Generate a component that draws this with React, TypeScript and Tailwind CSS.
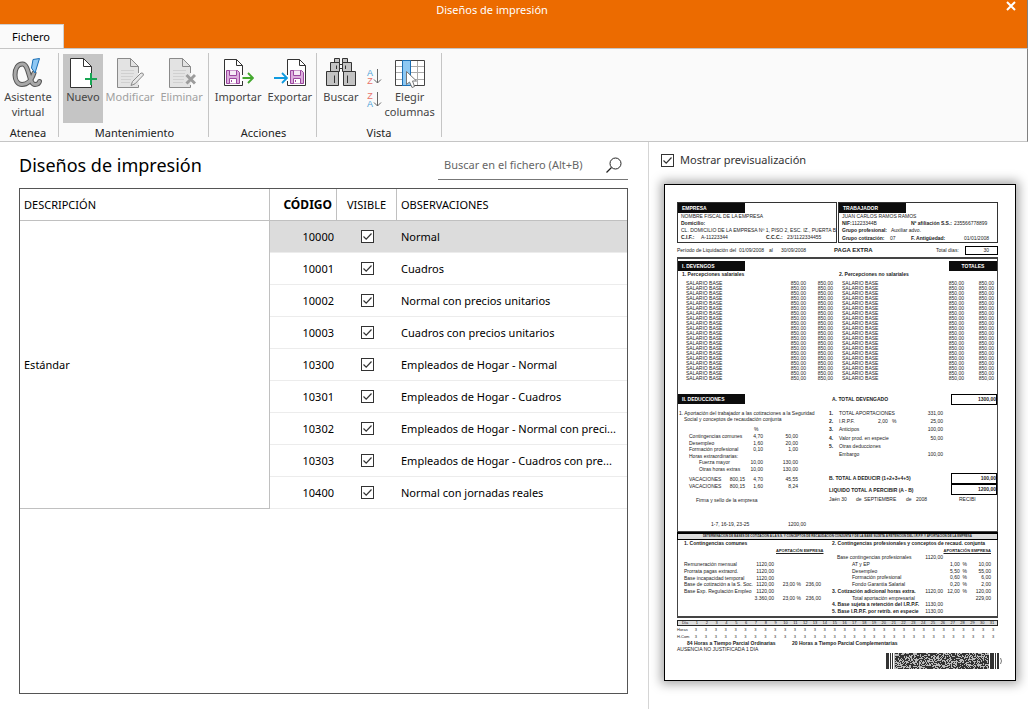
import React from 'react';

const rows = [
  { code: '10000', text: 'Normal' },
  { code: '10001', text: 'Cuadros' },
  { code: '10002', text: 'Normal con precios unitarios' },
  { code: '10003', text: 'Cuadros con precios unitarios' },
  { code: '10300', text: 'Empleados de Hogar - Normal' },
  { code: '10301', text: 'Empleados de Hogar - Cuadros' },
  { code: '10302', text: 'Empleados de Hogar - Normal con preci...' },
  { code: '10303', text: 'Empleados de Hogar - Cuadros con pre...' },
  { code: '10400', text: 'Normal con jornadas reales' },
];

/* ---------- Icons ---------- */

const AlphaIcon = () => (
  <svg className="w-8 h-8" viewBox="0 0 32 32" fill="none">
    <g strokeLinecap="round" strokeLinejoin="round">
      <path d="M22 16C20 22 16 27.5 10 27.5C5.5 27.5 3 23 3 18C3 11 6 7 10.5 7C17.5 7 16.5 27.5 23 27.5C26 27.5 27 26.5 27.5 24.5" stroke="#555" strokeWidth="5" />
      <path d="M22 16C20 22 16 27.5 10 27.5C5.5 27.5 3 23 3 18C3 11 6 7 10.5 7C17.5 7 16.5 27.5 23 27.5C26 27.5 27 26.5 27.5 24.5" stroke="#a8a8a8" strokeWidth="3" />
    </g>
    <path d="M21 2.5L27.5 1.5L23 16L19.5 11Z" fill="#8ec8f4" stroke="#1b6fb5" />
  </svg>
);

const Page = ({ stroke, fill }: { stroke: string; fill: string }) => (
  <>
    <path d="M2.5 1.5H15.5L23.5 9.5V30.5H2.5Z" fill={fill} />
    <path d="M23.5 16V9.5L15.5 1.5H2.5V30.5H23.5V28M15.5 1.5V9.5H23.5" stroke={stroke} />
  </>
);

const NewIcon = () => (
  <svg className="w-[29px] h-8" viewBox="0 0 29 32" fill="none">
    <Page stroke="#333" fill="#fff" />
    <path d="M23 16V28M17 22H29" stroke="#17a654" strokeWidth="2" />
  </svg>
);

const EditIcon = () => (
  <svg className="w-[29px] h-8" viewBox="0 0 29 32" fill="none">
    <Page stroke="#8a8a8a" fill="#e3e3e3" />
    <path d="M6 13.5H19M6 16.5H19M6 19.5H18M6 22.5H16M6 25.5H15" stroke="#d0d0d0" />
    <path d="M16 28.5L17.5 24.5L26 16Q28.5 15.5 28.5 18L20 26.8Z" fill="#e8e8e8" stroke="#8a8a8a" />
  </svg>
);

const DeleteIcon = () => (
  <svg className="w-[29px] h-8" viewBox="0 0 29 32" fill="none">
    <Page stroke="#8a8a8a" fill="#e3e3e3" />
    <path d="M6 13.5H19M6 16.5H18M6 19.5H17M6 22.5H17M6 25.5H16" stroke="#d0d0d0" />
    <path d="M19.5 18L28 26.5M28 18L19.5 26.5" stroke="#9c9c9c" strokeWidth="3" />
  </svg>
);

const Floppy = () => (
  <g stroke="#9b479f">
    <path d="M0.5 0.5H11.5L13.5 2.5V13.5H0.5Z" fill="#dcaedd" />
    <path d="M3.5 0.5V5.5H10.5V0.5" fill="#f6eaf6" />
    <path d="M3.5 13.5V8.5H10.5V13.5" fill="#fff" />
    <path d="M5.5 10V12" />
  </g>
);

const ImportIcon = () => (
  <svg className="w-8 h-8" viewBox="0 0 32 32" fill="none">
    <path d="M2.5 2.5H14.5L20.5 8.5V28.5H2.5Z" fill="#fff" />
    <path d="M20.5 18V8.5L14.5 2.5H2.5V28.5H20.5V24M14.5 2.5V8.5H20.5" stroke="#333" />
    <g transform="translate(4 13)">
      <Floppy />
    </g>
    <path d="M20.5 21H31M26 16L31 21L26 26" stroke="#43a82e" strokeWidth="1.8" />
  </svg>
);

const ExportIcon = () => (
  <svg className="w-8 h-8" viewBox="0 0 32 32" fill="none">
    <path d="M13.5 2.5H25.5L31.5 8.5V28.5H13.5Z" fill="#fff" />
    <path d="M13.5 18V2.5H25.5L31.5 8.5V28.5H13.5V24M25.5 2.5V8.5H31.5" stroke="#333" />
    <g transform="translate(16 13)">
      <Floppy />
    </g>
    <path d="M0 21H13M8 16L13 21L8 26" stroke="#0f9be0" strokeWidth="1.8" />
  </svg>
);

const BinocularsIcon = () => (
  <svg className="w-8 h-8" viewBox="0 0 32 32" fill="#c3c3c3" stroke="#333">
    <path d="M13.5 7.5H18.5V11.5H13.5Z" fill="#fff" />
    <path d="M9.5 1.5H14.5V5.5H9.5ZM17.5 1.5H22.5V5.5H17.5Z" />
    <path d="M5.5 5.5H14.5V14.5H5.5ZM17.5 5.5H26.5V14.5H17.5Z" />
    <path d="M1.5 14.5H13.5V28.5H1.5ZM18.5 14.5H30.5V28.5H18.5Z" />
    <path d="M11.5 8.5V12M20.5 8.5V12M9.5 18.5V26M22.5 18.5V26" />
  </svg>
);

const SortIcon = ({ up }: { up?: boolean }) => (
  <svg className="w-4 h-[17px]" viewBox="0 0 16 17" fill="none">
    <text x="4" y="8" fontSize="9" textAnchor="middle" fill={up ? '#e8736b' : '#4a9fd8'} fontFamily="Liberation Sans, sans-serif">{up ? 'Z' : 'A'}</text>
    <text x="4" y="16" fontSize="9" textAnchor="middle" fill={up ? '#4a9fd8' : '#e8736b'} fontFamily="Liberation Sans, sans-serif">{up ? 'A' : 'Z'}</text>
    <path d="M11.5 1V15M8 11.5L11.5 15L15 11.5" stroke="#666" />
  </svg>
);

const ColumnsIcon = () => (
  <svg className="w-8 h-8" viewBox="0 0 32 32" fill="none">
    <path d="M1.5 3.5H30.5V28.5H1.5Z" fill="#fff" />
    <path d="M1 9.5H30M1 15.5H30M1 22.5H30M23.5 4V28" stroke="#aaa" />
    <path d="M1.5 3.5H30.5V28.5H1.5Z" stroke="#444" />
    <path d="M8.5 3.5H16.5V28.5H8.5Z" fill="#8ec8f2" stroke="#1b6fb5" />
    <path d="M12.5 14.5V27.5L15.5 25L18 30.5L20.5 29.5L18.5 24H22.5Z" fill="#fff" stroke="#777" />
  </svg>
);

/* ---------- Shared pieces ---------- */

const Checkbox = ({ id, label }: { id: string; label?: string }) => {
  const [checked, setChecked] = React.useState(true);
  return (
    <span className="relative block w-[13px] h-[13px] shrink-0">
      <input
        id={id}
        type="checkbox"
        aria-label={label}
        checked={checked}
        onChange={() => setChecked(!checked)}
        className="block appearance-none w-[13px] h-[13px] border border-[#333] bg-white"
      />
      {checked && (
        <svg className="absolute inset-0 pointer-events-none" viewBox="0 0 13 13" fill="none">
          <path d="M2.5 6.5L5.2 9.2L10.5 3.5" stroke="#333" strokeWidth="1.2" />
        </svg>
      )}
    </span>
  );
};

type RibbonButtonProps = {
  icon: React.ReactNode;
  label: string;
  active?: boolean;
  disabled?: boolean;
};

const RibbonButton = ({ icon, label, active, disabled }: RibbonButtonProps) => (
  <button
    disabled={disabled}
    className={`flex flex-col items-center h-[69px] pt-[3px] px-[3px] leading-[15px] ${active ? 'bg-[#c5c5c5]' : ''} ${disabled ? 'text-[#a0a0a0]' : 'text-[#444]'}`}
  >
    {icon}
    <span className="whitespace-pre-line">{label}</span>
  </button>
);

const RibbonGroup = ({ title, width, children }: { title: string; width: string; children: React.ReactNode }) => (
  <div className={`flex flex-col justify-between h-[84px] border-r border-[#c5c5c5] ${width}`}>
    <div className="flex justify-center pt-px">{children}</div>
    <div className="text-center leading-[8px] text-[#222]">{title}</div>
  </div>
);

/* ---------- Payslip preview ---------- */

const concepts = Array.from({ length: 20 }, (_, i) => i);
const days = Array.from({ length: 31 }, (_, i) => i + 1);

const contributions = [
  ['Contingencias comunes', '4,70', '50,00'],
  ['Desempleo', '1,60', '20,00'],
  ['Formación profesional', '0,10', '1,00'],
  ['Horas extraordinarias:', '', ''],
  ['Fuerza mayor', '10,00', '130,00'],
  ['Otras horas extras', '10,00', '130,00'],
];

const deductions = [
  ['1.', 'TOTAL APORTACIONES', '', '331,00'],
  ['2.', 'I.R.P.F.', '2,00   %', '25,00'],
  ['3.', 'Anticipos', '', '100,00'],
  ['4.', 'Valor prod. en especie', '', '50,00'],
  ['5.', 'Otras deducciones', '', ''],
  ['', 'Embargo', '', '100,00'],
];

const commonBases = [
  ['Remuneración mensual', '1120,00', '', ''],
  ['Prorrata pagas extraord.', '1120,00', '', ''],
  ['Base incapacidad temporal', '1120,00', '', ''],
  ['Base de cotización a la S. Soc.', '1120,00', '23,00 %', '236,00'],
  ['Base Exp. Regulación Empleo', '1120,00', '', ''],
  ['', '3.360,00', '23,00 %', '236,00'],
];

const professionalBases = [
  { text: 'Base contingencias profesionales', base: '1120,00', pct: '', total: '', style: 'pl-[5px]' },
  { text: 'AT y EP', base: '', pct: '1,00  %', total: '10,00', style: 'pl-5' },
  { text: 'Desempleo', base: '', pct: '5,50  %', total: '55,00', style: 'pl-5' },
  { text: 'Formación profesional', base: '', pct: '0,60  %', total: '6,00', style: 'pl-5' },
  { text: 'Fondo Garantía Salarial', base: '', pct: '0,20  %', total: '2,00', style: 'pl-5' },
  { text: '3. Cotización adicional horas extra.', base: '1120,00', pct: '12,00  %', total: '120,00', style: 'font-bold' },
  { text: 'Total aportación empresarial', base: '', pct: '', total: '229,00', style: 'pl-5' },
  { text: '4. Base sujeta a retención del I.R.P.F.', base: '1130,00', pct: '', total: '', style: 'font-bold' },
  { text: '5. Base I.R.P.F. por retrib. en especie', base: '1130,00', pct: '', total: '', style: 'font-bold' },
];

const BlackBar = ({ children }: { children: React.ReactNode }) => (
  <div className="w-[67px] h-[10px] bg-[#0c0c0c] text-white font-bold leading-[10px] pl-1">{children}</div>
);

const AmountBox = ({ children }: { children: React.ReactNode }) => (
  <div className="w-[46px] h-[11px] border border-black font-bold leading-[9px] text-right">{children}</div>
);

// PDF417-like strip, modules come from a small pseudo random generator
const Barcode = () => {
  const cells: string[] = [];
  let seed = 7919;
  for (let y = 0; y < 16; y++) {
    for (let x = 9; x < 103; x++) {
      seed = (seed * 48271) % 2147483647;
      if (seed / 2147483647 < 0.56) cells.push(`M${x} ${y}h1v1h-1z`);
    }
  }
  return (
    <svg className="w-[116px] h-4" viewBox="0 0 116 16" fill="#333">
      <path d="M0 0h3v16h-3zM4 0h1v16h-1zM6 0h1v16h-1zM104 0h4v16h-4zM109 0h1v16h-1zM111 0h2v16h-2z" />
      <path d="M8 0h95v16h-95z" fill="#bbb" />
      <path d={cells.join('')} />
      <path d="M114.5 5q2 3 0 6" fill="none" stroke="#777" />
    </svg>
  );
};

const Payslip = () => (
  <div className="bg-white border border-black shadow-[0_0_10px_3px_rgba(0,0,0,0.35)] pl-3 pr-[17px] pt-[17px] pb-[11px] font-['Liberation_Sans',Arial,sans-serif] text-[5px] leading-[6px] text-[#222] whitespace-pre cursor-default">
    <div className="grid grid-cols-2 gap-px">
      <div className="h-[41px] border border-[#333]">
        <BlackBar>EMPRESA</BlackBar>
        <div className="pl-[3px] leading-[7px]">
          <div>NOMBRE FISCAL DE LA EMPRESA</div>
          <div className="font-bold">Domicilio:</div>
          <div>CL. DOMICILIO DE LA EMPRESA Nº 1, PISO 2, ESC. IZ., PUERTA B</div>
          <div className="grid grid-cols-[20px_65px_21px_1fr]">
            <b>C.I.F.:</b>
            <span>A-11223344</span>
            <b>C.C.C.:</b>
            <span>23/1122334455</span>
          </div>
        </div>
      </div>
      <div className="h-[41px] border border-[#333]">
        <BlackBar>TRABAJADOR</BlackBar>
        <div className="pl-[3px] leading-[7px]">
          <div>JUAN CARLOS RAMOS RAMOS</div>
          <div className="grid grid-cols-[69px_43px_1fr]">
            <span><b>NIF:</b>11223344B</span>
            <b>Nº afiliación S.S.:</b>
            <span>235566778899</span>
          </div>
          <div className="grid grid-cols-[49px_1fr]">
            <b>Grupo profesional:</b>
            <span>Auxiliar advo.</span>
          </div>
          <div className="grid grid-cols-[48px_21px_1fr_auto] pt-px pr-2">
            <b>Grupo cotización:</b>
            <span>07</span>
            <b>F. Antigüedad:</b>
            <span>01/01/2008</span>
          </div>
        </div>
      </div>
    </div>

    <div className="grid grid-cols-[62px_30px_8px_57px_102px_29px_1fr] items-center h-[14px]">
      <span>Período de Liquidación del</span>
      <span>01/09/2008</span>
      <span>al</span>
      <span className="pl-1">30/09/2008</span>
      <b className="text-[6px]">PAGA EXTRA</b>
      <span>Total días:</span>
      <span className="h-[9px] border border-black text-right pr-2 leading-[7px]">30</span>
    </div>

    <div className="h-[275px] border border-t-2 border-[#444]">
      <div className="flex justify-between pt-[2px]">
        <BlackBar>I. DEVENGOS</BlackBar>
        <div className="w-12 h-[10px] bg-[#0c0c0c] text-white font-bold leading-[10px] text-center">TOTALES</div>
      </div>
      <div className="grid grid-cols-[157px_1fr] pl-1 font-bold">
        <span>1. Percepciones salariales</span>
        <span>2. Percepciones no salariales</span>
      </div>
      <div className="pt-1 pl-2 pr-[3px] leading-[5px]">
        {concepts.map((i) => (
          <div key={i} className="grid grid-cols-[98px_22px_27px_9px_86px_36px_1fr] text-right">
            <span className="text-left">SALARIO BASE</span>
            <span>850,00</span>
            <span>850,00</span>
            <span />
            <span className="text-left">SALARIO BASE</span>
            <span>850,00</span>
            <span>850,00</span>
          </div>
        ))}
      </div>

      <div className="grid grid-cols-[154px_1fr_auto] pt-[13px]">
        <BlackBar>II. DEDUCCIONES</BlackBar>
        <b className="leading-[10px]">A. TOTAL DEVENGADO</b>
        <AmountBox>1300,00</AmountBox>
      </div>

      <div className="grid grid-cols-[151px_1fr] pt-[5px]">
        <div>
          <div className="pl-px">1. Aportación del trabajador a las cotizaciones a la Seguridad</div>
          <div className="pl-[6px]">Social y conceptos de recaudación conjunta</div>
          <div className="pl-[76px] pt-1">%</div>
          <div className="flex flex-col justify-between h-10 pt-px pl-[11px]">
            {contributions.map(([text, pct, amount], i) => (
              <div key={text} className="grid grid-cols-[54px_20px_35px] text-right">
                <span className={i > 3 ? 'text-left pl-[10px]' : 'text-left'}>{text}</span>
                <span>{pct}</span>
                <span>{amount}</span>
              </div>
            ))}
          </div>
          <div className="pt-1 pl-[11px] leading-[7px]">
            <div className="grid grid-cols-[36px_20px_18px_35px] text-right">
              <span className="text-left">VACACIONES</span>
              <span>800,15</span>
              <span>4,70</span>
              <span>45,55</span>
            </div>
            <div className="grid grid-cols-[36px_20px_18px_35px] text-right">
              <span className="text-left">VACACIONES</span>
              <span>800,15</span>
              <span>1,60</span>
              <span>8,24</span>
            </div>
          </div>
          <div className="pl-[18px] pt-[7px]">Firma y sello de la empresa</div>
          <div className="grid grid-cols-[77px_1fr] pt-[18px] pl-[33px]">
            <span>1-7, 16-19, 23-25</span>
            <span>1200,00</span>
          </div>
        </div>
        <div>
          <div className="flex flex-col justify-between h-[47px]">
            {deductions.map(([n, text, pct, amount]) => (
              <div key={text} className="grid grid-cols-[10px_39px_25px_40px]">
                <b>{n}</b>
                <span>{text}</span>
                <span>{pct}</span>
                <span className="text-right">{amount}</span>
              </div>
            ))}
          </div>
          <div className="flex justify-between pt-4">
            <b className="leading-[11px]">B. TOTAL A DEDUCIR (1+2+3+4+5)</b>
            <AmountBox>100,00</AmountBox>
          </div>
          <div className="flex justify-between">
            <b className="leading-[12px]">LIQUIDO TOTAL A PERCIBIR (A - B)</b>
            <AmountBox>1200,00</AmountBox>
          </div>
          <div className="grid grid-cols-[27px_8px_42px_10px_43px_1fr]">
            <span>Jaén 30</span>
            <span>de</span>
            <span>SEPTIEMBRE</span>
            <span>de</span>
            <span>2008</span>
            <span>RECIBI</span>
          </div>
        </div>
      </div>
    </div>

    <div className="h-2 border border-t-2 border-black bg-[#ddd] text-[3px] leading-[5px] font-bold text-center">
      DETERMINACIÓN DE BASES DE COTIZACIÓN A LA S.S. Y CONCEPTOS DE RECAUDACIÓN CONJUNTA Y DE LA BASE SUJETA A RETENCIÓN DEL I.R.P.F. Y APORTACIÓN DE LA EMPRESA
    </div>
    <div className="grid grid-cols-[154px_1fr] h-[78px] border border-t-0 border-b-2 border-[#444]">
      <div className="pl-[6px]">
        <b className="block">1. Contingencias comunes</b>
        <div className="pt-[2px] pl-[92px] text-[4px]"><b className="underline">APORTACIÓN EMPRESA</b></div>
        <div className="flex flex-col justify-between h-10 mt-[7px]">
          {commonBases.map(([text, base, pct, total], i) => (
            <div key={i} className="grid grid-cols-[70px_20px_27px_20px] text-right">
              <span className="text-left">{text}</span>
              <span>{base}</span>
              <span>{pct}</span>
              <span>{total}</span>
            </div>
          ))}
        </div>
      </div>
      <div>
        <b className="block">2. Contingencias profesionales y conceptos de recaud. conjunta</b>
        <div className="pt-[2px] text-right pr-[6px] text-[4px]"><b className="underline">APORTACIÓN EMPRESA</b></div>
        <div className="flex flex-col justify-between h-[60px]">
          {professionalBases.map(({ text, base, pct, total, style }) => (
            <div key={text} className="grid grid-cols-[91px_20px_24px_24px] text-right">
              <span className={`text-left ${style}`}>{text}</span>
              <span>{base}</span>
              <span>{pct}</span>
              <span>{total}</span>
            </div>
          ))}
        </div>
      </div>
    </div>

    <div className="pt-[2px] text-center text-[4px]">
      <div className="grid grid-cols-[14px_repeat(31,minmax(0,1fr))] h-[6px] leading-[4px] border border-[#222] bg-[#ddd]">
        <span>Día</span>
        {days.map((d) => (
          <span key={d}>{d}</span>
        ))}
      </div>
      {['Horas', 'H.Com'].map((name) => (
        <div key={name} className="grid grid-cols-[14px_repeat(31,minmax(0,1fr))] leading-[7px]">
          <span className="text-left">{name}</span>
          {days.map((d) => (
            <span key={d}>3</span>
          ))}
        </div>
      ))}
    </div>
    <div className="grid grid-cols-[105px_1fr] pl-[10px] font-bold">
      <span>84 Horas a Tiempo Parcial Ordinarias</span>
      <span>20 Horas a Tiempo Parcial Complementarias</span>
    </div>
    <div>AUSENCIA NO JUSTIFICADA 1 DIA</div>
    <div className="flex justify-end -mr-1 pt-px">
      <Barcode />
    </div>
  </div>
);

/* ---------- Page ---------- */

const App = () => {
  return (
    <div className="min-h-screen flex flex-col bg-white font-['Noto_Sans','Open_Sans',sans-serif] text-[11px] text-black">
      <header className="h-12 bg-[#ec6b00] flex flex-col justify-between border-r border-[#808080]">
        <div className="flex items-start">
          <div className="grow text-center text-white leading-5 pr-3">Diseños de impresión</div>
          <button aria-label="Cerrar" className="w-[31px] h-3 pr-px flex items-center justify-center">
            <svg className="w-[10px] h-[10px]" viewBox="0 0 10 10" fill="none">
              <path d="M1 1L9 9M9 1L1 9" stroke="#fff" strokeWidth="2" />
            </svg>
          </button>
        </div>
        <button className="w-16 h-6 pt-px pr-px bg-[#fafafa] border-t border-r border-[#d0d0d0] text-center">Fichero</button>
      </header>

      <div className="flex h-[94px] pt-1 bg-[#fafafa] border-t border-b border-r border-y-[#c5c5c5] border-r-[#808080]">
        <RibbonGroup title="Atenea" width="w-[59px] pr-[2px]">
          <RibbonButton icon={<AlphaIcon />} label={'Asistente\nvirtual'} />
        </RibbonGroup>
        <RibbonGroup title="Mantenimiento" width="w-[150px] pl-[2px]">
          <RibbonButton icon={<NewIcon />} label="Nuevo" active />
          <RibbonButton icon={<EditIcon />} label="Modificar" disabled />
          <RibbonButton icon={<DeleteIcon />} label="Eliminar" disabled />
        </RibbonGroup>
        <RibbonGroup title="Acciones" width="w-[108px] pl-[2px]">
          <RibbonButton icon={<ImportIcon />} label="Importar" />
          <RibbonButton icon={<ExportIcon />} label="Exportar" />
        </RibbonGroup>
        <RibbonGroup title="Vista" width="w-[125px]">
          <RibbonButton icon={<BinocularsIcon />} label="Buscar" />
          <div className="flex flex-col gap-[6px] pt-[14px] pl-1">
            <button aria-label="Orden ascendente"><SortIcon /></button>
            <button aria-label="Orden descendente"><SortIcon up /></button>
          </div>
          <RibbonButton icon={<ColumnsIcon />} label={'Elegir\ncolumnas'} />
        </RibbonGroup>
      </div>

      <main className="grow flex">
        <section className="grow flex flex-col border-r border-[#d5d5d5] pl-[19px] pr-5 pb-[15px]">
          <div className="flex justify-between items-start h-[46px] pt-2">
            <h1 className="text-lg leading-[30px]">Diseños de impresión</h1>
            <div className="flex items-center w-[190px] h-[30px] border-b border-[#777] pl-[6px] pr-[6px]">
              <input
                type="text"
                aria-label="Buscar en el fichero"
                placeholder="Buscar en el fichero (Alt+B)"
                className="grow min-w-0 pt-px placeholder:text-[#666] outline-none"
              />
              <button aria-label="Buscar">
                <svg className="w-4 h-4" viewBox="0 0 16 16" fill="none">
                  <circle cx="9.5" cy="6.5" r="5.5" stroke="#222" />
                  <path d="M5.5 10.5L0.5 15.5" stroke="#222" strokeWidth="1.2" />
                </svg>
              </button>
            </div>
          </div>

          <div className="grow border border-[#555]">
            <table className="w-full table-fixed border-separate border-spacing-0">
              <colgroup>
                <col className="w-[250px]" />
                <col className="w-[67px]" />
                <col className="w-[60px]" />
                <col />
              </colgroup>
              <thead>
                <tr className="h-8">
                  <th className="border-r border-b border-[#c0c0c0] pt-px pl-1 text-left font-normal">DESCRIPCIÓN</th>
                  <th className="border-r border-b border-[#c0c0c0] pt-px pr-1 text-right text-xs font-bold">CÓDIGO</th>
                  <th className="border-r border-b border-[#c0c0c0] pt-px text-center font-normal">VISIBLE</th>
                  <th className="border-b border-[#c0c0c0] pt-px pl-1 text-left font-normal">OBSERVACIONES</th>
                </tr>
              </thead>
              <tbody>
                {rows.map((row, idx) => (
                  <tr key={row.code} className={`h-8 ${idx === 0 ? 'bg-[#dcdcdc]' : ''}`}>
                    {idx === 0 && (
                      <td rowSpan={rows.length} className="bg-white border-r border-b border-[#c0c0c0] pt-px pl-1">Estándar</td>
                    )}
                    <td className="border-b border-[#ececec] pt-px pr-[3px] text-right">{row.code}</td>
                    <td className="border-b border-[#ececec] pl-6">
                      <Checkbox id={`visible-${row.code}`} label={`Visible ${row.code}`} />
                    </td>
                    <td className="border-b border-[#ececec] pt-px pl-1 whitespace-nowrap">{row.text}</td>
                  </tr>
                ))}
              </tbody>
            </table>
          </div>
        </section>

        <aside className="w-[379px] shrink-0 pl-[15px] pr-3 pt-[10px]">
          <div className="flex items-center gap-[6px] h-4 -ml-[3px] mb-4 text-[#333]">
            <Checkbox id="preview" />
            <label htmlFor="preview">Mostrar previsualización</label>
          </div>
          <Payslip />
        </aside>
      </main>
    </div>
  );
};

export default App;
